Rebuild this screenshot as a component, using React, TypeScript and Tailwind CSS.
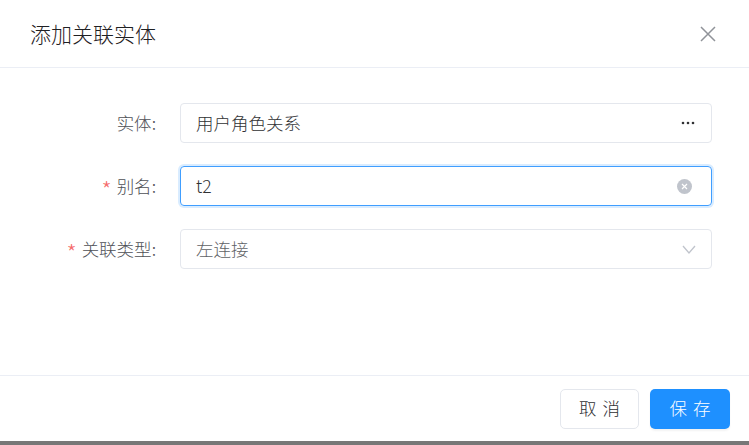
import React from "react";

const font = { fontFamily: '"Noto Sans CJK SC", "Noto Sans", sans-serif' };

function Row({ label, required, children }: { label: string; required?: boolean; children: React.ReactNode }) {
  return (
    <div className="flex items-center h-[40px]">
      <div className="w-[156px] flex justify-end items-center text-[17.5px] text-[#4e5056] font-light">
        {required && <span className="text-[#f56c6c] mr-[5px] text-[23px] leading-none mt-[7px]">*</span>}
        <span>{label}:</span>
      </div>
      <div className="ml-[24px] w-[532px] h-[40px]">{children}</div>
    </div>
  );
}

export default function App() {
  return (
    <div className="w-[749px] h-[445px] bg-[#777777] flex flex-col font-light" style={font}>
      <div className="h-[441px] bg-white flex flex-col">
        <div className="h-[67px] flex items-center justify-between pl-[30px] pr-[33px] border-b border-[#ebeef5] box-content">
          <span className="text-[21px] text-[#1f2023] mt-[1px]">添加关联实体</span>
          <svg width="16" height="16" viewBox="0 0 16 16">
            <path d="M1 1 L15 15 M15 1 L1 15" stroke="#909399" strokeWidth="1.5" />
          </svg>
        </div>
        <div className="flex-1 pt-[35px] flex flex-col gap-[23px]">
          <Row label="实体">
            <div className="h-full border border-[#e4e7ed] rounded-[4px] flex items-center justify-between pl-[15px] pr-[16px] text-[17.5px] text-[#303133]">
              <span>用户角色关系</span>
              <svg width="14" height="4" viewBox="0 0 14 4">
                <circle cx="2" cy="2" r="1.3" fill="#303133" />
                <circle cx="7" cy="2" r="1.3" fill="#303133" />
                <circle cx="12" cy="2" r="1.3" fill="#303133" />
              </svg>
            </div>
          </Row>
          <Row label="别名" required>
            <div className="h-full border border-[#409eff] rounded-[4px] shadow-[0_0_0_2px_rgba(64,158,255,0.2)] flex items-center justify-between pl-[15px] pr-[19px] text-[17.5px] text-[#303133]">
              <span>t2</span>
              <svg width="15" height="15" viewBox="0 0 15 15">
                <circle cx="7.5" cy="7.5" r="7.5" fill="#c0c4cc" />
                <path d="M5 5 L10 10 M10 5 L5 10" stroke="white" strokeWidth="1.2" />
              </svg>
            </div>
          </Row>
          <Row label="关联类型" required>
            <div className="h-full border border-[#e4e7ed] rounded-[4px] flex items-center justify-between pl-[15px] pr-[15px] text-[17.5px] text-[#606266]">
              <span>左连接</span>
              <svg width="14" height="9" viewBox="0 0 14 9">
                <path d="M1 1 L7 8 L13 1" stroke="#c0c4cc" strokeWidth="1.3" fill="none" />
              </svg>
            </div>
          </Row>
        </div>
        <div className="border-t border-[#ebeef5] h-[66px] flex items-center justify-end pr-[19px] gap-[11px]">
          <button className="w-[79px] h-[40px] border border-[#e4e7ed] rounded-[5px] bg-white text-[17.5px] text-[#303133] flex items-center justify-center">
            <span className="tracking-[0.34em] mr-[-0.34em]">取消</span>
          </button>
          <button className="w-[80px] h-[40px] rounded-[5px] bg-[#1e90ff] text-[17.5px] text-white flex items-center justify-center shadow-[0_2px_2px_rgba(0,0,0,0.05)]">
            <span className="tracking-[0.34em] mr-[-0.34em]">保存</span>
          </button>
        </div>
      </div>
    </div>
  );
}
